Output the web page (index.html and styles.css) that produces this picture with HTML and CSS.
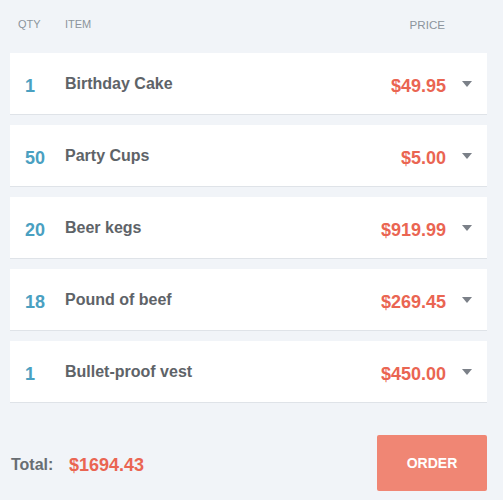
FILE: index.html
```html
<!DOCTYPE html>
<html>
<head>
<meta charset="utf-8">
<link rel="stylesheet" href="styles.css">
</head>
<body>
<div class="cart">
  <div class="head">
    <span class="h-qty">QTY</span>
    <span class="h-item">ITEM</span>
    <span class="h-price">PRICE</span>
  </div>
  <div class="list">
    <div class="row"><span class="qty">1</span><span class="item">Birthday Cake</span><span class="price">$49.95</span><span class="caret"></span></div>
    <div class="row"><span class="qty">50</span><span class="item">Party Cups</span><span class="price">$5.00</span><span class="caret"></span></div>
    <div class="row"><span class="qty">20</span><span class="item">Beer kegs</span><span class="price">$919.99</span><span class="caret"></span></div>
    <div class="row"><span class="qty">18</span><span class="item">Pound of beef</span><span class="price">$269.45</span><span class="caret"></span></div>
    <div class="row"><span class="qty">1</span><span class="item">Bullet-proof vest</span><span class="price">$450.00</span><span class="caret"></span></div>
  </div>
  <div class="foot">
    <span class="total-label">Total:</span>
    <span class="total">$1694.43</span>
    <button class="order">ORDER</button>
  </div>
</div>
</body>
</html>
```
FILE: styles.css
```css
html, body {
  margin: 0;
  padding: 0;
  background: #f1f4f8;
}
body {
  font-family: "Liberation Sans", Arial, sans-serif;
  width: 503px;
  height: 500px;
  overflow: hidden;
}
.cart {
  padding: 0 16px 0 10px;
}
.head {
  display: flex;
  align-items: center;
  height: 53px;
  box-sizing: border-box;
  font-size: 11px;
  color: #8c949c;
  padding-bottom: 5px;
}
.h-qty {
  width: 55px;
  padding-left: 8px;
  box-sizing: border-box;
}
.h-item {
  flex: 1;
}
.h-price {
  font-size: 11.6px;
  margin-right: 42px;
}
.list {
  display: flex;
  flex-direction: column;
  gap: 10px;
}
.row {
  display: flex;
  align-items: center;
  height: 61px;
  background: #fff;
  border-bottom: 1px solid #dfe3e8;
  padding: 0 15px;
}
.qty {
  width: 40px;
  font-size: 18px;
  font-weight: bold;
  color: #4aa0c1;
  padding-top: 5px;
}
.item {
  flex: 1;
  font-size: 16px;
  font-weight: bold;
  color: #5e6368;
}
.price {
  font-size: 18px;
  font-weight: bold;
  color: #ea6552;
  padding-top: 5px;
  padding-right: 1px;
}
.caret {
  width: 0;
  height: 0;
  border-left: 5.5px solid transparent;
  border-right: 5.5px solid transparent;
  border-top: 6px solid #7b8088;
  margin-left: 15px;
  margin-top: 1px;
}
.foot {
  display: flex;
  align-items: center;
  margin-top: 32px;
}
.total-label {
  font-size: 16px;
  font-weight: bold;
  color: #686d72;
  margin-left: 1px;
  width: 58px;
  padding-top: 4px;
}
.total {
  flex: 1;
  font-size: 18px;
  font-weight: bold;
  color: #ea6552;
  padding-top: 5px;
}
.order {
  width: 110px;
  height: 56px;
  border: none;
  border-radius: 2px;
  background: #f08674;
  color: #fff;
  font-family: "Liberation Sans", Arial, sans-serif;
  font-size: 14px;
  font-weight: bold;
  padding: 0;
}
```
